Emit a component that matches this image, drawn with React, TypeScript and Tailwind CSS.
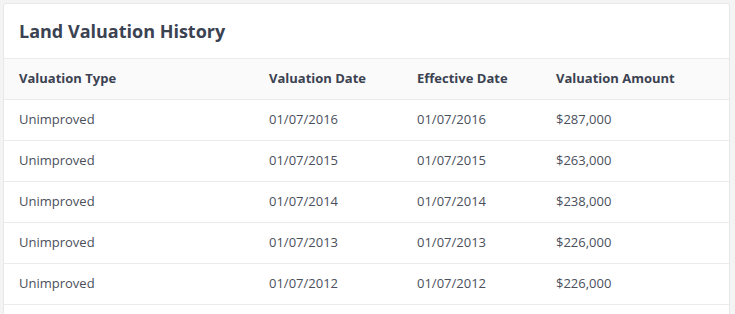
import React from "react";

const rows = [
  ["Unimproved", "01/07/2016", "01/07/2016", "$287,000"],
  ["Unimproved", "01/07/2015", "01/07/2015", "$263,000"],
  ["Unimproved", "01/07/2014", "01/07/2014", "$238,000"],
  ["Unimproved", "01/07/2013", "01/07/2013", "$226,000"],
  ["Unimproved", "01/07/2012", "01/07/2012", "$226,000"],
];

export default function App() {
  return (
    <div
      className="w-[735px] h-[314px] overflow-hidden bg-[#f4f4f4] pl-[3px] pt-[3px]"
      style={{ fontFamily: '"Open Sans", "Noto Sans", sans-serif' }}
    >
      <div className="w-[727px] bg-white border border-[#e8e8e8] rounded-[3px]">
        <div className="h-[55px] flex items-center px-[15px] border-b border-[#ebebeb]">
          <h2 className="text-[18px] font-bold text-[#3b4251]">
            Land Valuation History
          </h2>
        </div>
        <div className="grid grid-cols-[250px_148px_139px_1fr] h-[41px] items-center bg-[#fafafa] border-b border-[#ebebeb] text-[13px] font-bold text-[#3b4251]">
          <div className="px-[15px]">Valuation Type</div>
          <div className="px-[15px]">Valuation Date</div>
          <div className="px-[15px]">Effective Date</div>
          <div className="px-[15px]">Valuation Amount</div>
        </div>
        {rows.map((r, i) => (
          <div
            key={i}
            className="grid grid-cols-[250px_148px_139px_1fr] h-[41px] items-center border-b border-[#ebebeb] text-[13px] text-[#4a505c]"
          >
            {r.map((c, j) => (
              <div key={j} className="px-[15px]">
                {c}
              </div>
            ))}
          </div>
        ))}
        <div className="h-[40px]" />
      </div>
    </div>
  );
}
